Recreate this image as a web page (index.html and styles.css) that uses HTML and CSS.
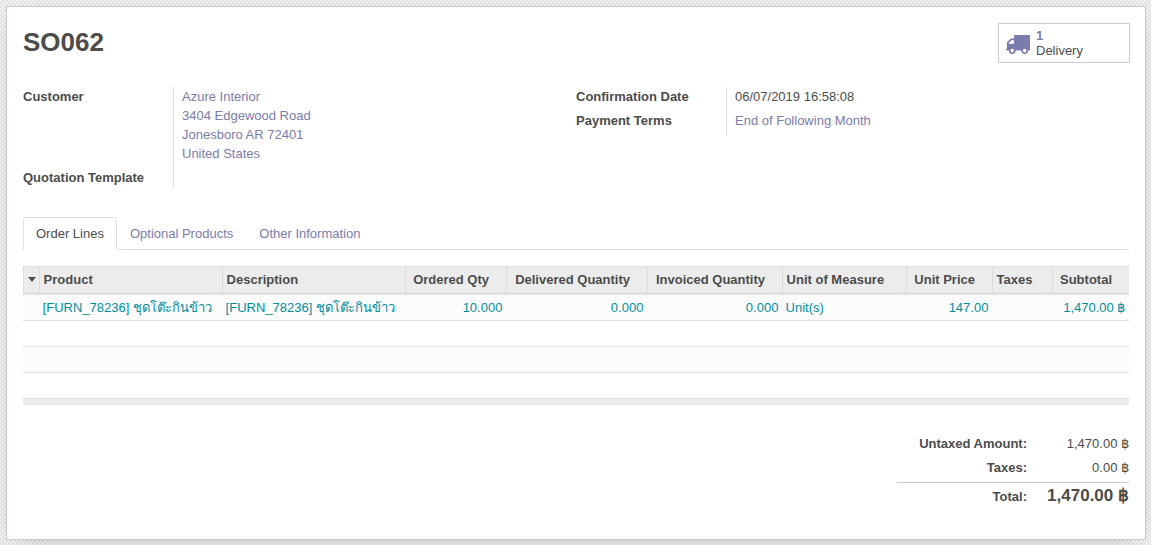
FILE: index.html
```html
<!DOCTYPE html>
<html lang="en">
<head>
<meta charset="utf-8">
<title>SO062</title>
<link rel="stylesheet" href="styles.css">
</head>
<body>
<main class="sheet">
  <header class="sheet-head">
    <h1 class="order-name">SO062</h1>
    <button class="stat-button" type="button">
      <svg class="truck" viewBox="64 256 1728 1408" preserveAspectRatio="none" aria-hidden="true"><path fill="currentColor" d="M640 1408q0-52-38-90t-90-38-90 38-38 90 38 90 90 38 90-38 38-90zm-384-512h384v-256h-158q-13 0-22 9l-195 195q-9 9-9 22v30zm1280 512q0-52-38-90t-90-38-90 38-38 90 38 90 90 38 90-38 38-90zm256-1088v1024q0 15-4 26.500t-13.500 18.500-16.500 11.500-23.500 6-22.500 2-25.500 0-22.500-.5q0 106-75 181t-181 75-181-75-75-181h-384q0 106-75 181t-181 75-181-75-75-181h-64q-3 0-22.500.5t-25.500 0-22.500-2-23.500-6-16.500-11.500-13.500-18.500-4-26.500q0-26 19-45t45-19v-320q0-8-.5-35t0-38 2.500-34.500 6.500-37 14-30.500 22.500-30l198-198q19-19 50.500-32t58.500-13h160v-192q0-26 19-45t45-19h1024q26 0 45 19t19 45z"/></svg>
      <span class="stat-info"><b class="stat-value">1</b><span>Delivery</span></span>
    </button>
  </header>

  <section class="groups">
    <dl class="group group-left">
      <dt>Customer</dt>
      <dd class="link">Azure Interior<br>3404 Edgewood Road<br>Jonesboro AR 72401<br>United States</dd>
      <dt>Quotation Template</dt>
      <dd></dd>
    </dl>
    <dl class="group group-right">
      <dt>Confirmation Date</dt>
      <dd>06/07/2019 16:58:08</dd>
      <dt>Payment Terms</dt>
      <dd class="link">End of Following Month</dd>
    </dl>
  </section>

  <nav class="tabs">
    <a class="tab active">Order Lines</a>
    <a class="tab">Optional Products</a>
    <a class="tab">Other Information</a>
  </nav>

  <table class="lines">
    <colgroup>
      <col class="c-handle"><col class="c-product"><col class="c-desc"><col class="c-ordered"><col class="c-delivered"><col class="c-invoiced"><col class="c-uom"><col class="c-price"><col class="c-taxes"><col class="c-subtotal">
    </colgroup>
    <thead>
      <tr>
        <th class="handle"><span class="caret"></span></th>
        <th>Product</th>
        <th>Description</th>
        <th class="num">Ordered Qty</th>
        <th class="num">Delivered Quantity</th>
        <th class="num">Invoiced Quantity</th>
        <th>Unit of Measure</th>
        <th class="num">Unit Price</th>
        <th>Taxes</th>
        <th class="num">Subtotal</th>
      </tr>
    </thead>
    <tbody>
      <tr>
        <td></td>
        <td>[FURN_78236] <span class="thai" lang="th">ชุดโต๊ะกินข้าว</span></td>
        <td>[FURN_78236] <span class="thai" lang="th">ชุดโต๊ะกินข้าว</span></td>
        <td class="num">10.000</td>
        <td class="num">0.000</td>
        <td class="num">0.000</td>
        <td>Unit(s)</td>
        <td class="num">147.00</td>
        <td></td>
        <td class="num">1,470.00 ฿</td>
      </tr>
      <tr><td colspan="10"></td></tr>
      <tr><td colspan="10"></td></tr>
      <tr><td colspan="10"></td></tr>
    </tbody>
  </table>
  <div class="lines-foot"></div>

  <dl class="totals">
    <dt>Untaxed Amount:</dt><dd>1,470.00 ฿</dd>
    <dt>Taxes:</dt><dd>0.00 ฿</dd>
    <dt class="total">Total:</dt><dd class="total grand">1,470.00 ฿</dd>
  </dl>
</main>
</body>
</html>
```
FILE: styles.css
```css
* { box-sizing: border-box; }

body {
  margin: 0;
  height: 545px;
  padding: 6px 5px 5px 6px;
  overflow: hidden;
  font: 13px/19px "Liberation Sans", Arial, sans-serif;
  color: #4c4c4c;
  background: repeating-conic-gradient(#e2e2e2 0 25%, #f1f1f1 0 50%) 0 0 / 4px 4px;
}

.sheet {
  height: 534px;
  padding: 16px 16px 0 16px;
  border: 1px solid #c8c8d3;
  background: #fff;
  box-shadow: 0 5px 20px -15px rgba(0, 0, 0, 0.6);
}

.sheet-head {
  display: flex;
  justify-content: space-between;
  height: 64px;
  margin-right: -1px;
}

.order-name {
  margin: 0;
  font-size: 26px;
  line-height: 38px;
}

.stat-button {
  display: flex;
  align-items: center;
  width: 132px;
  height: 40px;
  padding: 0 0 0 7px;
  border: 1px solid #ccc;
  background: #fff;
  color: inherit;
  font: inherit;
  text-align: left;
}

.truck {
  width: 24px;
  height: 19px;
  margin-top: 3px;
  overflow: visible;
  color: #7c7bad;
}

.stat-info {
  display: flex;
  flex-direction: column;
  padding-left: 6px;
  line-height: 15px;
}

.stat-value, .link { color: #7c7bad; }

.groups {
  display: grid;
  grid-template-columns: 553px 553px;
  height: 130px;
  align-items: start;
}

.group {
  display: grid;
  grid-template-columns: 150px 1fr;
  margin: 0;
}

.group-left { grid-template-rows: 81px 19px; }
.group-right { grid-template-rows: 24px 25px; }

.group dt { font-weight: bold; }

.group dd {
  margin: 0;
  padding-left: 8px;
  border-left: 1px solid #ddd;
}

.tabs {
  display: flex;
  height: 33px;
  border-bottom: 1px solid #dee2e6;
}

.tab {
  height: 33px;
  padding: 6px 12px;
  border: 1px solid transparent;
  color: #7c7bad;
}

.tab.active {
  border-color: #dee2e6 #dee2e6 #fff;
  border-radius: 3px 3px 0 0;
  background: #fff;
  color: #4c4c4c;
}

.lines {
  width: 1106px;
  margin-top: 16px;
  table-layout: fixed;
  border-collapse: separate;
  border-spacing: 0;
}

.c-handle { width: 16px; }
.c-product { width: 183px; }
.c-desc { width: 183px; }
.c-ordered { width: 101px; }
.c-delivered { width: 141px; }
.c-invoiced { width: 135px; }
.c-uom { width: 124px; }
.c-price { width: 86px; }
.c-taxes { width: 60px; }
.c-subtotal { width: 77px; }

.lines th, .lines td {
  padding: 0 3.6px;
  text-align: left;
  white-space: nowrap;
}

.lines th {
  height: 29px;
  border: solid #dee2e6;
  border-width: 1px 0 3px 1px;
  border-left-color: #dcdcdc;
  background: #ececec;
}

.lines td {
  height: 26px;
  border-bottom: 1px solid #dee2e6;
  color: #008fa1;
}

.thai { letter-spacing: 0.06px; }

.lines tbody tr:nth-child(odd) { background: #fcfcfc; }
.lines .num { text-align: right; }
.lines th.num { padding-right: 17px; }
.lines th.handle { padding: 0 0 0 4px; }

.caret {
  display: block;
  width: 8px;
  border: solid transparent;
  border-width: 5px 4px 0;
  border-top-color: #4c4c4c;
}

.lines-foot {
  height: 6px;
  background: #ececec;
}

.totals {
  display: grid;
  grid-template-columns: 130px 102px;
  grid-template-rows: 24px 24px 28px;
  justify-content: end;
  margin: 29px 0 0;
  text-align: right;
}

.totals dt { font-weight: bold; }
.totals dd { margin: 0; }
.totals .total { padding-top: 4px; border-top: 1px solid #c8c8c8; }
.totals .grand { padding-top: 3px; font-size: 17px; font-weight: bold; }
```
